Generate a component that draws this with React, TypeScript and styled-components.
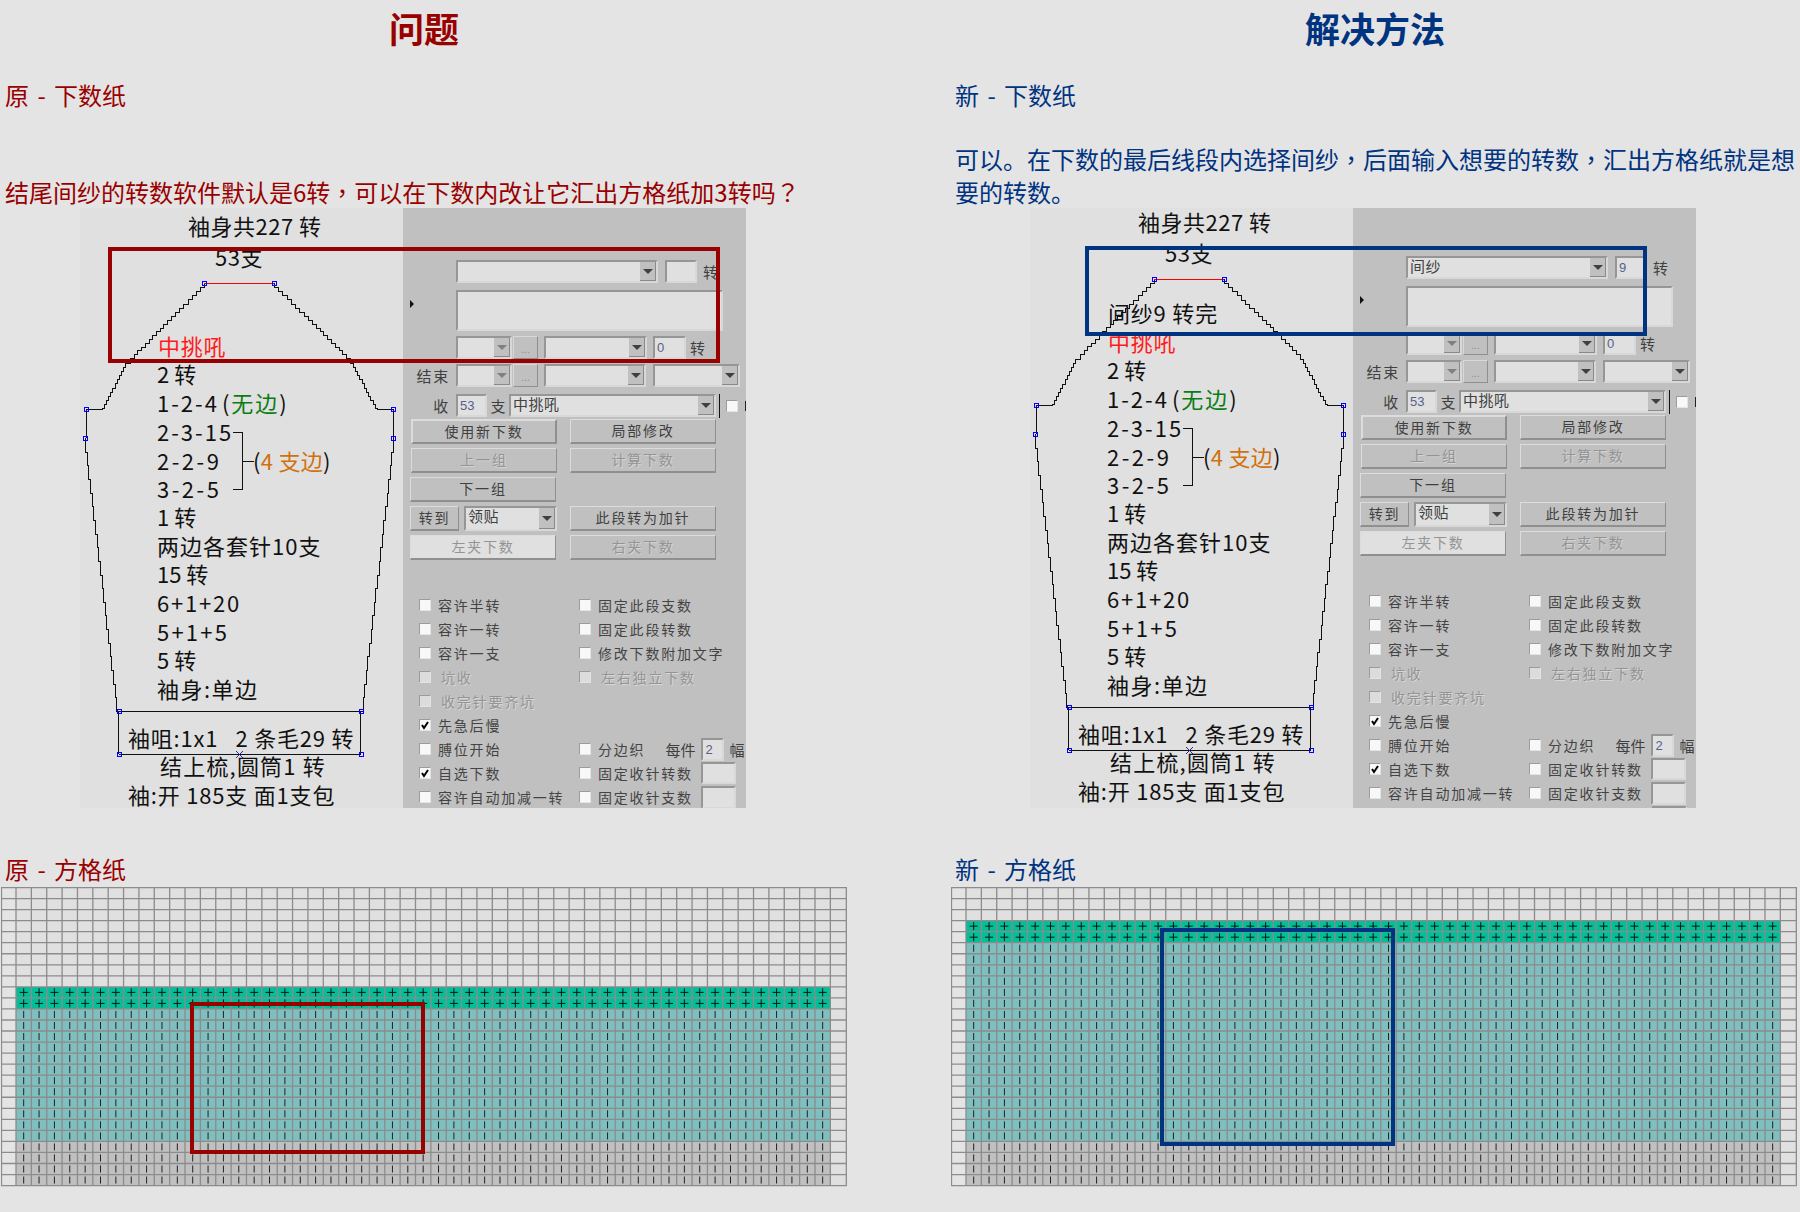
import React from 'react';
import styled, { createGlobalStyle } from 'styled-components';

const RED = '#990000';
const BLUE = '#003380';
const FONT = '"Noto Sans CJK SC", "Liberation Sans", sans-serif';

const GlobalStyle = createGlobalStyle`
  html, body {
    margin: 0;
    padding: 0;
    width: 1800px;
    height: 1212px;
    overflow: hidden;
    background: #e4e4e4;
    font-family: ${FONT};
  }
`;

const Page = styled.div`
  display: grid;
  grid-template-columns: 950px 850px;
  width: 1800px;
  height: 1212px;
`;

const Column = styled.section<{ $ink: string }>`
  display: flex;
  flex-direction: column;
  color: ${(p) => p.$ink};
`;

const Title = styled.h1<{ $width: number; $pad: number }>`
  margin: 0 0 0 ${(p) => p.$pad}px;
  width: ${(p) => p.$width}px;
  height: 58px;
  font-size: 35px;
  line-height: 56px;
  font-weight: 700;
  text-align: center;
`;

const Heading = styled.h2`
  margin: 20px 0 0 5px;
  font-size: 24px;
  line-height: 33px;
  font-weight: 400;
  word-spacing: 3px;
`;

const Intro = styled.div`
  display: flex;
  align-items: flex-end;
  height: 97px;
  margin-left: 5px;
  font-size: 24px;
  line-height: 33px;
`;

// the source picture centres its comma and question mark in the em box
const Punct = styled.span`
  font-family: "Noto Sans CJK TC", sans-serif;
`;

const Sheet = styled.div`
  position: relative;
  display: flex;
  flex: none;
  width: 666px;
  height: 600px;
  margin-left: 80px;
  overflow: hidden;
`;

const Sketch = styled.div`
  flex: none;
  width: 323px;
  background: #e0e0e0;
  overflow: hidden;
`;

const Canvas = styled.div<{ $shift: number }>`
  position: relative;
  height: 620px;
  margin-top: ${(p) => p.$shift}px;
  color: #111;

  svg {
    position: absolute;
    left: 0;
    top: 0;
  }
`;

const Label = styled.div<{ $x: number; $y: number; $track: number }>`
  position: absolute;
  left: ${(p) => p.$x}px;
  top: ${(p) => p.$y - 1}px;
  transform: translateY(-50%);
  font-size: 22px;
  line-height: 26px;
  letter-spacing: ${(p) => p.$track}px;
  white-space: pre;
`;

const Tint = styled.span<{ $color: string }>`
  color: ${(p) => p.$color};
`;

const Paren = styled.span`
  margin-left: 3px;
`;

const Frame = styled.div<{ $ink: string; $l: number; $t: number; $w: number; $h: number }>`
  position: absolute;
  left: ${(p) => p.$l}px;
  top: ${(p) => p.$t}px;
  width: ${(p) => p.$w}px;
  height: ${(p) => p.$h}px;
  box-sizing: border-box;
  border: 4px solid ${(p) => p.$ink};
`;

/* ---- control panel ---- */

const Form = styled.div`
  flex: none;
  width: 343px;
  height: 640px;
  background: #c0c0c0;
  color: #404040;
  font-size: 14px;
  letter-spacing: 1.8px;
  overflow: hidden;
`;

const FormBody = styled.div<{ $shift: number }>`
  padding-top: ${(p) => 52 + p.$shift}px;
`;

const CtlRow = styled.div<{ $after: number; $h?: number }>`
  display: flex;
  align-items: center;
  height: ${(p) => p.$h ?? 23}px;
  margin-bottom: ${(p) => p.$after}px;
`;

const RowLabel = styled.div`
  flex: none;
  width: 47px;
  margin-right: 6px;
  text-align: right;
  font-size: 15px;
`;

const MarkerCell = styled.div`
  flex: none;
  display: flex;
  align-items: center;
  width: 46px;
  padding: 0 0 14px 7px;
`;

const Marker = styled.i`
  width: 0;
  height: 0;
  border-left: 4px solid #111;
  border-top: 4px solid transparent;
  border-bottom: 4px solid transparent;
`;

const Sunken = styled.div`
  box-sizing: border-box;
  flex: none;
  background: #e0e0e0;
  border: 2px solid;
  border-color: #969696 #d8d8d8 #d8d8d8 #969696;
`;

const Combo = styled(Sunken)<{ $w: number; $gap?: number }>`
  display: flex;
  width: ${(p) => p.$w}px;
  height: 100%;
  margin-left: ${(p) => p.$gap ?? 0}px;
`;

const ComboValue = styled.div`
  flex: 1;
  padding-left: 2px;
  font-size: 15px;
  line-height: 15px;
  letter-spacing: 0.5px;
  overflow: hidden;
  white-space: nowrap;
`;

const ComboArrow = styled.div<{ $off?: boolean }>`
  display: flex;
  align-items: center;
  justify-content: center;
  flex: none;
  width: 15px;
  background: #c0c0c0;
  border-right: 1px solid #8a8a8a;
  border-bottom: 1px solid #8a8a8a;

  &::after {
    content: '';
    border-top: 5px solid ${(p) => (p.$off ? '#808080' : '#404040')};
    border-left: 5px solid transparent;
    border-right: 5px solid transparent;
  }
`;

const Field = styled(Sunken)<{ $w: number; $h?: number; $gap?: number }>`
  width: ${(p) => p.$w}px;
  height: ${(p) => (p.$h ? `${p.$h}px` : '100%')};
  margin-left: ${(p) => p.$gap ?? 0}px;
  padding-left: 2px;
  font-family: "Liberation Sans", sans-serif;
  font-size: 13px;
  line-height: 19px;
  letter-spacing: 0;
  color: #56618a;
`;

const TextBox = styled(Sunken)`
  width: 267px;
  height: 41px;
`;

const Dots = styled.div`
  box-sizing: border-box;
  flex: none;
  width: 25px;
  height: 100%;
  margin-left: 1px;
  border: 1px solid;
  border-color: #d8d8d8 #8f8f8f #8f8f8f #d8d8d8;
  color: #909090;
  font-size: 10px;
  line-height: 24px;
  letter-spacing: 0;
  text-align: center;
`;

const Unit = styled.div<{ $gap: number; $w?: number }>`
  flex: none;
  margin-left: ${(p) => p.$gap}px;
  width: ${(p) => (p.$w ? `${p.$w}px` : 'auto')};
  font-size: 15px;
  text-align: center;
  letter-spacing: 0;
`;

const VLine = styled.i`
  flex: none;
  width: 1px;
  height: 24px;
  margin: 0 6px 0 3px;
  background: #111;
`;

const Bar = styled.i`
  flex: none;
  width: 1px;
  height: 10px;
  margin-left: 7px;
  background: #222;
`;

const PushGrid = styled.div`
  display: grid;
  grid-template-columns: 147px 146px;
  grid-auto-rows: 25px;
  column-gap: 13px;
  row-gap: 4px;
  margin: 2px 0 0 7px;
`;

const Push = styled.div<{ $off?: boolean; $main?: boolean; $light?: boolean; $nudge?: boolean; $w?: number }>`
  box-sizing: border-box;
  width: ${(p) => p.$w ?? 146}px;
  height: 100%;
  margin-left: ${(p) => (p.$nudge ? 1 : 0)}px;
  border: ${(p) => (p.$main ? 2 : 1)}px solid;
  border-color: #dcdcdc #8f8f8f #8f8f8f #dcdcdc;
  border-bottom-width: 2px;
  background: ${(p) => (p.$light ? '#e0e0e0' : '#c0c0c0')};
  color: ${(p) => (p.$off ? '#949494' : '#404040')};
  text-shadow: ${(p) => (p.$off && !p.$light ? '1px 1px 0 #d4d4d4' : 'none')};
  font-size: 14px;
  line-height: 20px;
  text-align: center;
`;

const SwitchCell = styled.div`
  display: flex;
`;

const BlankCell = styled.div``;

const Checks = styled.div`
  display: grid;
  grid-template-columns: 160px 167px;
  grid-auto-rows: 24px;
  margin: 33px 0 0 16px;
`;

const CheckCell = styled.div<{ $col: number }>`
  grid-column: ${(p) => p.$col};
  display: flex;
  align-items: center;
  white-space: nowrap;
`;

const Box = styled.span<{ $off?: boolean }>`
  box-sizing: border-box;
  display: flex;
  align-items: center;
  justify-content: center;
  flex: none;
  width: 12px;
  height: 12px;
  border: 1px solid;
  border-color: #9c9c9c #e4e4e4 #e4e4e4 #9c9c9c;
  background: ${(p) => (p.$off ? '#dcdcdc' : '#f8f8f8')};
`;

const CheckText = styled.span<{ $off?: boolean }>`
  margin-left: ${(p) => (p.$off ? 10 : 7)}px;
  color: ${(p) => (p.$off ? '#949494' : '#444')};
  text-shadow: ${(p) => (p.$off ? '1px 1px 0 #d8d8d8' : 'none')};
`;

/* ---- stitch chart ---- */

const ChartHeading = styled(Heading)`
  margin-top: 44px;
  height: 35px;
`;

const ChartWrap = styled.div<{ $x: number }>`
  position: relative;
  width: 848px;
  height: 300px;
  margin-left: ${(p) => p.$x}px;

  svg {
    display: block;
  }
`;

type Mark = { x: number; y: number };

const CAP_L: Mark[] = [
  { x: 124, y: 75 },
  { x: 87, y: 112 },
  { x: 50, y: 150 },
  { x: 45, y: 155 },
  { x: 22, y: 200 },
];
const CAP_R: Mark[] = [
  { x: 194, y: 75 },
  { x: 232, y: 112 },
  { x: 270, y: 150 },
  { x: 275, y: 159 },
  { x: 297, y: 200 },
];

// stair-stepped outline, the way the software draws a shaped edge
const stairs = (pts: Mark[], step: number) => {
  let d = `M${pts[0].x} ${pts[0].y}`;
  for (let i = 1; i < pts.length; i++) {
    const a = pts[i - 1];
    const b = pts[i];
    const n = Math.max(1, Math.round(Math.abs(b.y - a.y) / step));
    for (let k = 1; k <= n; k++) {
      const x = Math.round(a.x + ((b.x - a.x) * k) / n);
      const y = Math.round(a.y + ((b.y - a.y) * k) / n);
      d += `V${y}H${x}`;
    }
  }
  return d;
};

const NODES: Mark[] = [
  { x: 124, y: 75 },
  { x: 194, y: 75 },
  { x: 6, y: 201 },
  { x: 313, y: 201 },
  { x: 5, y: 230 },
  { x: 313, y: 230 },
  { x: 38.5, y: 503 },
  { x: 280.5, y: 503 },
  { x: 38.5, y: 546 },
  { x: 280.5, y: 546 },
];

const Outline = () => (
  <svg width="323" height="620" fill="none" shapeRendering="crispEdges">
    <g stroke="#111" strokeWidth="1">
      <path d={stairs(CAP_L, 4) + 'V201H6V230'} />
      <path d={stairs(CAP_R, 4) + 'V201H313V230'} />
      <path d={stairs([{ x: 5, y: 230 }, { x: 38, y: 503 }], 14)} />
      <path d={stairs([{ x: 313, y: 230 }, { x: 281, y: 503 }], 14)} />
      <path d="M38.5 503H280.5M38.5 503V546M280.5 503V546M38.5 546H280.5" />
      <path d="M153 224H162V281H153M162 253H174" />
    </g>
    <path d="M124 75H194" stroke="#ff0000" />
    <g stroke="#0000ff">
      {NODES.map((n) => (
        <rect key={`${n.x}-${n.y}`} x={Math.round(n.x) - 2} y={n.y - 2} width="4" height="4" fill="none" />
      ))}
    </g>
    <path d="M156 543L163 550M163 543L156 550" stroke="#2a2aa0" shapeRendering="auto" />
  </svg>
);

const GREEN = '#0a7d12';
const ORANGE = '#d0700f';

const Lines = () => (
  <>
    <Label $x={108} $y={18} $track={0.5}>袖身共227 转</Label>
    <Label $x={135} $y={49} $track={0.5}>53支</Label>
    <Label $x={78} $y={138} $track={0.8}><Tint $color="#ff1a1a">中挑吼</Tint></Label>
    <Label $x={77} $y={166} $track={0}>2 转</Label>
    <Label $x={77} $y={195} $track={2}>1-2-4<Paren>(</Paren><Tint $color={GREEN}>无边</Tint>)</Label>
    <Label $x={77} $y={224} $track={2}>2-3-15</Label>
    <Label $x={77} $y={253} $track={2.5}>2-2-9</Label>
    <Label $x={173} $y={253} $track={0.3}>(<Tint $color={ORANGE}>4 支边</Tint>)</Label>
    <Label $x={77} $y={281} $track={2.5}>3-2-5</Label>
    <Label $x={77} $y={309} $track={0}>1 转</Label>
    <Label $x={77} $y={338} $track={1}>两边各套针10支</Label>
    <Label $x={77} $y={366} $track={0}>15 转</Label>
    <Label $x={77} $y={395} $track={1.8}>6+1+20</Label>
    <Label $x={77} $y={424} $track={2.2}>5+1+5</Label>
    <Label $x={77} $y={452} $track={0}>5 转</Label>
    <Label $x={77} $y={481} $track={1.5}>袖身:单边</Label>
    <Label $x={48} $y={530} $track={0.8}>袖咀:1x1   2 条毛29 转</Label>
    <Label $x={80} $y={558} $track={1.2}>结上梳,圆筒1 转</Label>
    <Label $x={48} $y={587} $track={0.8}>袖:开 185支 面1支包</Label>
  </>
);

const Tick = () => (
  <svg width="10" height="10" viewBox="0 0 10 10">
    <path d="M2 5l2 3 4-6" fill="none" stroke="#000" strokeWidth="2" />
  </svg>
);

type CheckProps = { col?: number; text: string; on?: boolean; off?: boolean; children?: React.ReactNode };

const Check = ({ col = 1, text, on, off, children }: CheckProps) => (
  <CheckCell $col={col}>
    <Box $off={off}>{on && <Tick />}</Box>
    <CheckText $off={off}>{text}</CheckText>
    {children}
  </CheckCell>
);

type PanelProps = { shift: number; yarn?: string; turns?: string };

const Panel = ({ shift, yarn = '', turns = '' }: PanelProps) => (
  <Form>
    <FormBody $shift={shift}>
      <CtlRow $after={7}>
        <RowLabel />
        <Combo $w={202}><ComboValue>{yarn}</ComboValue><ComboArrow /></Combo>
        <Field $w={32} $gap={7}>{turns}</Field>
        <Unit $gap={6}>转</Unit>
      </CtlRow>
      <CtlRow $after={5} $h={41}>
        <MarkerCell><Marker /></MarkerCell>
        <TextBox />
      </CtlRow>
      <CtlRow $after={5}>
        <RowLabel />
        <Combo $w={56}><ComboValue /><ComboArrow $off /></Combo>
        <Dots>...</Dots>
        <Combo $w={103} $gap={6}><ComboValue /><ComboArrow /></Combo>
        <Field $w={33} $gap={6}>0</Field>
        <Unit $gap={4}>转</Unit>
      </CtlRow>
      <CtlRow $after={7}>
        <RowLabel>结束</RowLabel>
        <Combo $w={56}><ComboValue /><ComboArrow $off /></Combo>
        <Dots>...</Dots>
        <Combo $w={102} $gap={6}><ComboValue /><ComboArrow /></Combo>
        <Combo $w={87} $gap={7}><ComboValue /><ComboArrow /></Combo>
      </CtlRow>
      <CtlRow $after={0}>
        <RowLabel>收</RowLabel>
        <Field $w={31}>53</Field>
        <Unit $gap={0} $w={22}>支</Unit>
        <Combo $w={207}><ComboValue>中挑吼</ComboValue><ComboArrow /></Combo>
        <VLine />
        <Box />
        <Bar />
      </CtlRow>
      <PushGrid>
        <Push $main $nudge>使用新下数</Push>
        <Push>局部修改</Push>
        <Push $off $nudge>上一组</Push>
        <Push $off>计算下数</Push>
        <Push>下一组</Push>
        <BlankCell />
        <SwitchCell>
          <Push $w={50}>转到</Push>
          <Combo $w={93} $gap={5}><ComboValue>领贴</ComboValue><ComboArrow /></Combo>
        </SwitchCell>
        <Push>此段转为加针</Push>
        <Push $off $light>左夹下数</Push>
        <Push $off>右夹下数</Push>
      </PushGrid>
      <Checks>
        <Check text="容许半转" />
        <Check col={2} text="固定此段支数" />
        <Check text="容许一转" />
        <Check col={2} text="固定此段转数" />
        <Check text="容许一支" />
        <Check col={2} text="修改下数附加文字" />
        <Check text="坑收" off />
        <Check col={2} text="左右独立下数" off />
        <Check text="收完针要齐坑" off />
        <Check text="先急后慢" on />
        <Check text="膊位开始" />
        <Check col={2} text="分边织">
          <Unit $gap={20}>每件</Unit>
          <Field $w={23} $h={23} $gap={6}>2</Field>
          <Unit $gap={5}>幅</Unit>
        </Check>
        <Check text="自选下数" on />
        <Check col={2} text="固定收针转数"><Field $w={35} $h={22} $gap={8} /></Check>
        <Check text="容许自动加减一转" />
        <Check col={2} text="固定收针支数"><Field $w={35} $h={23} $gap={8} /></Check>
        <CheckCell $col={2}><Field $w={35} $h={23} $gap={123} /></CheckCell>
      </Checks>
    </FormBody>
  </Form>
);

const COL = 15.365;
const ROW = 11.04;
const COLS = 53;
const ROWS = 27;
const HEAD = 15;

const StitchChart = ({ empty }: { empty: number }) => {
  const y = (r: number) => 0.5 + r * ROW;
  const x = (c: number) => HEAD + c * COL;
  const plain = 14 + (empty === 3 ? 6 : 0);
  const grid: string[] = [];
  for (let r = 0; r <= ROWS; r++) grid.push(`M0 ${y(r)}H${x(COLS) + 16.5}`);
  grid.push(`M0.5 0V${y(ROWS)}M${x(COLS) + 16} 0V${y(ROWS)}`);
  for (let c = 0; c <= COLS; c++) grid.push(`M${x(c)} 0V${y(ROWS)}`);
  const plus: string[] = [];
  const bars: string[] = [];
  for (let c = 0; c < COLS; c++) {
    const cx = x(c) + COL / 2;
    for (let r = empty; r < ROWS; r++) {
      const cy = y(r) + ROW / 2;
      if (r < empty + 2) plus.push(`M${cx - 4} ${cy}H${cx + 4}M${cx} ${cy - 4}V${cy + 4}`);
      else bars.push(`M${cx} ${cy - 3.5}V${cy + 3.5}`);
    }
  }
  const bandX = x(0);
  const bandW = COLS * COL;
  return (
    <svg width="848" height="300">
      <rect x={bandX} y={y(empty)} width={bandW} height={2 * ROW} fill="#00bf99" />
      <rect x={bandX} y={y(empty + 2)} width={bandW} height={(plain - 2) * ROW} fill="#7fbfbf" />
      <rect x={bandX} y={y(ROWS - 4)} width={bandW} height={4 * ROW} fill="#c0c0c0" />
      <rect x="0" y="0" width={bandX} height={y(ROWS)} fill="#e4e4e4" />
      <rect x={bandX} y="0" width={bandW + 16} height={y(empty)} fill="#e0e0e0" />
      <rect x={x(COLS)} y={y(empty)} width="16" height={y(ROWS) - y(empty)} fill="#e0e0e0" />
      <path d={grid.join('')} stroke="#8c8c8c" strokeWidth="1.3" fill="none" />
      <path d={plus.join('')} stroke="#111" strokeWidth="1" fill="none" />
      <path d={bars.join('')} stroke="#222" strokeWidth="1" fill="none" />
    </svg>
  );
};

const App = () => (
  <>
    <GlobalStyle />
    <Page>
      <Column $ink={RED}>
        <Title $width={848} $pad={0}>问题</Title>
        <Heading>原 - 下数纸</Heading>
        <Intro>
          <span>结尾间纱的转数软件默认是6转<Punct>，</Punct>可以在下数内改让它汇出方格纸加3转吗<Punct>？</Punct></span>
        </Intro>
        <Sheet>
          <Sketch>
            <Canvas $shift={0}>
              <Outline />
              <Lines />
            </Canvas>
          </Sketch>
          <Panel shift={0} />
          <Frame $ink={RED} $l={28} $t={39} $w={612} $h={116} />
        </Sheet>
        <ChartHeading>原 - 方格纸</ChartHeading>
        <ChartWrap $x={1}>
          <StitchChart empty={9} />
          <Frame $ink={RED} $l={189} $t={115} $w={235} $h={152} />
        </ChartWrap>
      </Column>
      <Column $ink={BLUE}>
        <Title $width={848} $pad={1}>解决方法</Title>
        <Heading>新 - 下数纸</Heading>
        <Intro>
          <span>可以。在下数的最后线段内选择间纱<Punct>，</Punct>后面输入想要的转数<Punct>，</Punct>汇出方格纸就是想要的转数。</span>
        </Intro>
        <Sheet>
          <Sketch>
            <Canvas $shift={-4}>
              <Outline />
              <Lines />
              <Label $x={78} $y={109} $track={0.8}>间纱9 转完</Label>
            </Canvas>
          </Sketch>
          <Panel shift={-4} yarn="间纱" turns="9" />
          <Frame $ink={BLUE} $l={55} $t={38} $w={562} $h={90} />
        </Sheet>
        <ChartHeading>新 - 方格纸</ChartHeading>
        <ChartWrap $x={1}>
          <StitchChart empty={3} />
          <Frame $ink={BLUE} $l={209} $t={41} $w={235} $h={218} />
        </ChartWrap>
      </Column>
    </Page>
  </>
);

export default App;
